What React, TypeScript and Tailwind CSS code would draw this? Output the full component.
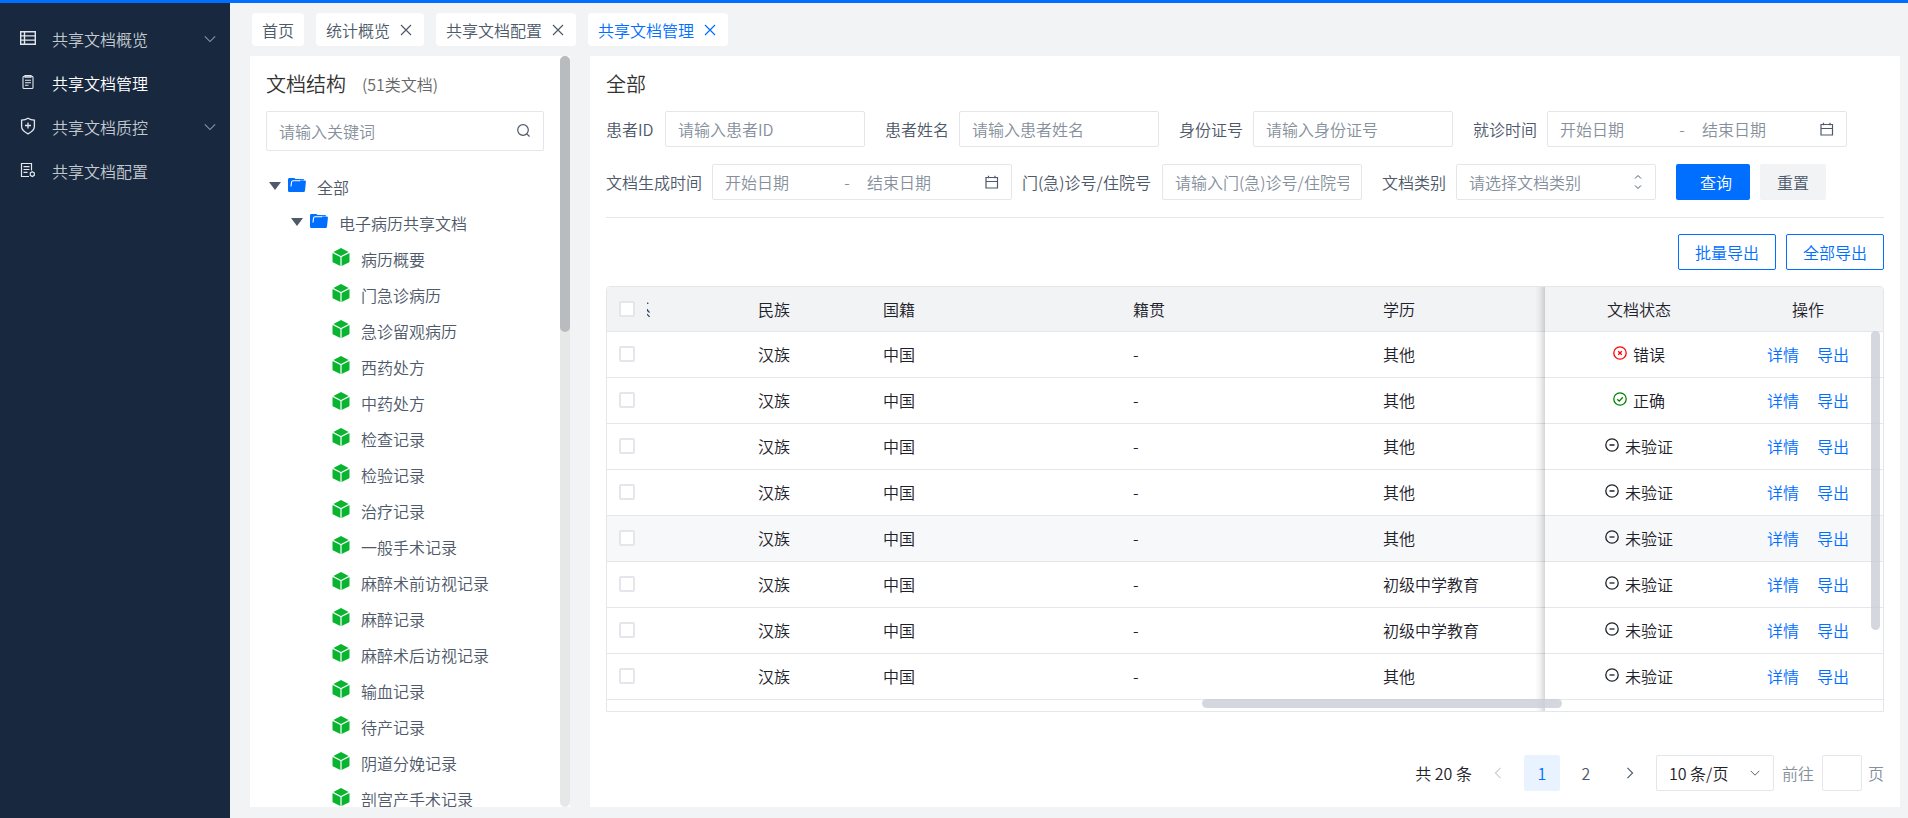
import type { ReactNode } from "react";

const FONT = "font-['Noto_Sans_CJK_SC',sans-serif]";

function Chevron({ className, d = "M1 1.5l6 6 6-6" }: { className: string; d?: string }) {
  return (
    <svg viewBox="0 0 14 9" className={className} fill="none" stroke="currentColor" strokeWidth="1.3" aria-hidden="true">
      <path d={d} />
    </svg>
  );
}

function CloseIcon() {
  return (
    <svg viewBox="0 0 14 14" className="size-3.5" fill="none" stroke="currentColor" strokeWidth="1.2" aria-hidden="true">
      <path d="M1 2l10 10M11 2L1 12" />
    </svg>
  );
}

function ListIcon() {
  return (
    <svg viewBox="0 0 16 16" className="size-4" fill="none" stroke="currentColor" strokeWidth="1.4" aria-hidden="true">
      <path d="M.7 1.700h14.600v12.600H.7zM4.500 1.700v12.600M.7 5.900h14.600M.7 10.100h14.600" />
    </svg>
  );
}

function ClipboardIcon() {
  return (
    <svg viewBox="0 0 16 16" className="size-4" fill="none" stroke="currentColor" strokeWidth="1.1" aria-hidden="true">
      <rect x="3" y="2.300" width="10" height="12.200" rx="1" />
      <path d="M5 1.500h6v1.800H5zM5 6.200h6M5 8.700h6M5 11.200h3.500" />
    </svg>
  );
}

function ShieldIcon() {
  return (
    <svg viewBox="0 0 16 18" className="h-[18px] w-4" fill="none" stroke="currentColor" strokeWidth="1.300" aria-hidden="true">
      <path d="M8 1.200c2 1.300 4 1.800 6.400 1.900v6.400c0 3-2.600 5.400-6.400 7.300-3.800-1.900-6.400-4.300-6.400-7.300V3.100C4 3 6 2.500 8 1.200zM8 5.500v6M5 8.500h6" />
    </svg>
  );
}

function DocConfigIcon() {
  return (
    <svg viewBox="0 0 16 16" className="size-4" fill="none" stroke="currentColor" strokeWidth="1.200" aria-hidden="true">
      <path d="M11.500 8.500V1.500h-10v13H9M3.500 4.700h6M3.500 7.500h6M3.500 10.300h4" />
      <path d="M12.300 9.700l2 1.200v2.400l-2 1.200-2-1.200v-2.400z" />
    </svg>
  );
}

function FolderIcon() {
  return (
    <svg viewBox="0 0 18 14" className="mb-1 h-3.5 w-[18px]" aria-hidden="true">
      <path d="M1.500 0h4.800l1.200 1h7.200c.9 0 1.400.5 1.400 1.400V4L14 13.500H1.600C.6 13.500 0 12.900 0 12V1.500C0 .6.600 0 1.500 0z" fill="#006eff" />
      <path d="M4.200 2.500h12.300c.9 0 1.600.6 1.400 1.600l-.9 8.300c-.1 1-.8 1.600-1.800 1.600H1.500C.6 14 0 13.400 0 12.500L3 8z" fill="#006eff" />
      <path d="M3 8.500l.5-4.200c.1-.9.700-1.500 1.600-1.500h7" fill="none" stroke="#fff" strokeWidth="1.100" />
      <path d="M11 2.300h5.500" fill="none" stroke="#fff" strokeOpacity=".6" strokeWidth=".8" />
    </svg>
  );
}

function CubeIcon() {
  return (
    <svg viewBox="0 0 18 18" className="mb-1 size-[18px]" fill="#09b530" aria-hidden="true">
      <path d="M9 0l7.600 3.900L9 7.900 1.400 3.900z" />
      <path d="M.5 5l7.900 4.100V18L1.200 14.600c-.5-.2-.7-.6-.7-1.100z" />
      <path d="M17.500 5L9.600 9.100V18l7.200-3.400c.5-.2.700-.6.700-1.100z" />
    </svg>
  );
}

function SearchIcon() {
  return (
    <svg viewBox="0 0 14 14" className="mb-0.5 size-3.5" fill="none" stroke="#4e5969" strokeWidth="1.200" aria-hidden="true">
      <circle cx="6" cy="7" r="5.300" />
      <path d="M9.800 10.800l2.700 2.700" />
    </svg>
  );
}

function CalendarIcon() {
  return (
    <svg viewBox="0 0 14 14" className="size-3.5 shrink-0" fill="none" stroke="#4e5969" strokeWidth="1.200" aria-hidden="true">
      <path d="M1 2.500h11.500v10.500H1zM1 6.500h11.500M3.500.8v2.400M10 .8v2.400" />
    </svg>
  );
}

type Status = "错误" | "正确" | "未验证";

function StatusIcon({ status }: { status: Status }) {
  const d = status === "错误" ? "M5.200 5.200l3.600 3.600M8.800 5.200L5.200 8.800" : status === "正确" ? "M4.200 7.200l2 1.900 3.600-3.900" : "M4.500 7h5";
  const color = status === "错误" ? "text-[#ff0000]" : status === "正确" ? "text-[#008000]" : "text-[#1d2129]";
  return (
    <svg viewBox="0 0 14 14" className={`mb-0.5 size-3.5 ${color}`} fill="none" stroke="currentColor" strokeWidth="1.300" aria-hidden="true">
      <circle cx="7" cy="7" r="6.200" />
      <path d={d} />
    </svg>
  );
}

const menu = [
  { label: "共享文档概览", icon: <ListIcon />, children: true, active: false },
  { label: "共享文档管理", icon: <ClipboardIcon />, children: false, active: true },
  { label: "共享文档质控", icon: <ShieldIcon />, children: true, active: false },
  { label: "共享文档配置", icon: <DocConfigIcon />, children: false, active: false },
];

const tabs = [
  { label: "首页", closable: false, active: false },
  { label: "统计概览", closable: true, active: false },
  { label: "共享文档配置", closable: true, active: false },
  { label: "共享文档管理", closable: true, active: true },
];

const docTypes = [
  "病历概要", "门急诊病历", "急诊留观病历", "西药处方", "中药处方", "检查记录", "检验记录", "治疗记录",
  "一般手术记录", "麻醉术前访视记录", "麻醉记录", "麻醉术后访视记录", "输血记录", "待产记录", "阴道分娩记录", "剖宫产手术记录",
];

const rows: { edu: string; status: Status; hover?: boolean }[] = [
  { edu: "其他", status: "错误" },
  { edu: "其他", status: "正确" },
  { edu: "其他", status: "未验证" },
  { edu: "其他", status: "未验证" },
  { edu: "其他", status: "未验证", hover: true },
  { edu: "初级中学教育", status: "未验证" },
  { edu: "初级中学教育", status: "未验证" },
  { edu: "其他", status: "未验证" },
];

function Sidebar() {
  return (
    <nav className="w-[230px] shrink-0 bg-[#18293f] pt-3.5">
      {menu.map((m) => (
        <a key={m.label} href="#" className={`flex h-11 items-center pl-5 pr-3.5 ${m.active ? "text-white" : "text-[#c3c8ce]"}`}>
          <span className="mb-0.5 text-[#e4e7eb]">{m.icon}</span>
          <span className="ml-4 flex-1">{m.label}</span>
          {m.children && <Chevron className="h-2 w-3 text-[#8a94a0]" />}
        </a>
      ))}
    </nav>
  );
}

function TabBar() {
  return (
    <div className="flex gap-3 px-0.5">
      {tabs.map((t) => (
        <div key={t.label} className={`flex h-[33px] items-center gap-2.5 rounded-sm bg-white px-2.5 ${t.active ? "text-[#006eff]" : "text-[#4e5969]"}`}>
          <a href="#">{t.label}</a>
          {t.closable && (
            <button type="button" aria-label={`关闭${t.label}`}>
              <CloseIcon />
            </button>
          )}
        </div>
      ))}
    </div>
  );
}

function Triangle() {
  return (
    <svg viewBox="0 0 12 8" className="mb-0.5 h-2 w-3" fill="#4e5969" aria-hidden="true">
      <path d="M0 0h12L6 8z" />
    </svg>
  );
}

function TreePanel() {
  return (
    <aside className="flex w-80 shrink-0 bg-white">
      <div className="flex min-w-0 flex-1 flex-col overflow-hidden px-4">
        <div className="flex h-[55px] shrink-0 items-center gap-4">
          <h2 className="text-xl font-[350] text-[#333333]">文档结构</h2>
          <span className="text-[#666666]">(51类文档)</span>
        </div>
        <label className="flex h-10 shrink-0 items-center rounded-xs border border-[#e5e6eb] px-3">
          <input aria-label="关键词" placeholder="请输入关键词" className="min-w-0 flex-1 outline-none placeholder:text-[#86909c]" />
          <SearchIcon />
        </label>
        <ul className="mt-[18px] min-h-0 flex-1 overflow-hidden text-[#4e5969]">
          <li className="flex h-9 items-center pl-[3px]">
            <Triangle />
            <span className="ml-[7px] mr-[11px]"><FolderIcon /></span>
            全部
          </li>
          <li className="flex h-9 items-center pl-[25px]">
            <Triangle />
            <span className="ml-[7px] mr-[11px]"><FolderIcon /></span>
            电子病历共享文档
          </li>
          {docTypes.map((d) => (
            <li key={d} className="flex h-9 items-center gap-[11px] pl-[66px]">
              <CubeIcon />
              {d}
            </li>
          ))}
        </ul>
      </div>
      <div className="w-2.5 rounded-full bg-[#e6e8e8]">
        <div className="h-[276px] rounded-full bg-[#b9bcbe]" />
      </div>
    </aside>
  );
}

function Field({ id, label, children, tight }: { id: string; label: string; children: ReactNode; tight?: boolean }) {
  return (
    <div className={`flex items-center ${tight ? "mr-2.5" : "mr-5"}`}>
      <label htmlFor={id} className={`mr-2.5 ${label.includes("/") ? "min-w-[130px]" : "min-w-[49px]"}`}>{label}</label>
      {children}
    </div>
  );
}

function TextField({ id, label }: { id: string; label: string }) {
  return (
    <Field id={id} label={label}>
      <input id={id} placeholder={`请输入${label}`} className="h-9 w-50 rounded-xs border border-[#e5e6eb] px-3 outline-none placeholder:text-[#86909c]" />
    </Field>
  );
}

function DateRange({ id, label }: { id: string; label: string }) {
  return (
    <Field id={id} label={label} tight>
      <div className="flex h-9 w-75 items-center rounded-xs border border-[#e5e6eb] px-3 text-[#86909c]">
        <input id={id} placeholder="开始日期" className="w-28 outline-none placeholder:text-[#86909c]" />
        <span className="w-5 text-center">-</span>
        <input aria-label={`${label}结束日期`} placeholder="结束日期" className="ml-2.5 min-w-0 flex-1 outline-none placeholder:text-[#86909c]" />
        <CalendarIcon />
      </div>
    </Field>
  );
}

function Filters() {
  return (
    <form className="flex flex-wrap items-center gap-y-[17px] border-b border-[#e5e6eb] pb-[17px] text-[#4e5969]">
      <TextField id="pid" label="患者ID" />
      <TextField id="pname" label="患者姓名" />
      <TextField id="idcard" label="身份证号" />
      <DateRange id="visit" label="就诊时间" />
      <DateRange id="created" label="文档生成时间" />
      <TextField id="visitno" label="门(急)诊号/住院号" />
      <Field id="category" label="文档类别">
        <div className="relative">
          <select id="category" className="h-9 w-50 appearance-none rounded-xs border border-[#e5e6eb] px-3 text-[#86909c] outline-none">
            <option>请选择文档类别</option>
          </select>
          <svg viewBox="0 0 8 16" className="pointer-events-none absolute right-3.5 top-2.5 h-4 w-2" fill="none" stroke="#4e5969" aria-hidden="true">
            <path d="M1 4.500l3-3 3 3M1 11.500l3 3 3-3" />
          </svg>
        </div>
      </Field>
      <button type="button" className="h-9 rounded-xs bg-[#006eff] pl-6 pr-[18px] text-white">查询</button>
      <button type="button" className="ml-2.5 h-9 rounded-xs bg-[#f2f3f5] px-[17px]">重置</button>
    </form>
  );
}

const boxClass = "block size-4 appearance-none rounded-xs border-2 border-[#e5e6eb] bg-white";

function RecordTable() {
  return (
    <div className="relative overflow-hidden rounded-t-sm border border-[#e5e6eb] pb-[11px] text-[#1d2129]">
      <table className="w-full table-fixed border-collapse text-left">
        <colgroup>
          <col className="w-10" />
          <col className="w-[100px]" />
          <col className="w-[125px]" />
          <col className="w-[250px]" />
          <col className="w-[250px]" />
          <col />
          <col className="w-[188px]" />
          <col className="w-[150px]" />
        </colgroup>
        <thead>
          <tr className="h-11 border-b border-[#e5e6eb] bg-[#f2f3f5] [&>th]:font-[350]">
            <th className="pl-3"><input type="checkbox" aria-label="全选" className={boxClass} /></th>
            <th><span className="flex w-1 justify-end overflow-hidden">系</span></th>
            <th className="pl-[11px]">民族</th>
            <th className="pl-[11px]">国籍</th>
            <th className="pl-[11px]">籍贯</th>
            <th className="pl-[11px]">学历</th>
            <th className="text-center">文档状态</th>
            <th className="text-center">操作</th>
          </tr>
        </thead>
        <tbody>
          {rows.map((r, i) => (
            <tr key={i} className={`h-[46px] border-b border-[#e5e6eb] ${r.hover ? "bg-[#f7f8fa]" : ""}`}>
              <td className="pl-3"><input type="checkbox" aria-label={`选择第${i + 1}行`} className={boxClass} /></td>
              <td />
              <td className="pl-[11px]">汉族</td>
              <td className="pl-[11px]">中国</td>
              <td className="pl-[11px]">-</td>
              <td className="pl-[11px]">{r.edu}</td>
              <td>
                <span className="flex items-center justify-center gap-1.5">
                  <StatusIcon status={r.status} />
                  {r.status}
                </span>
              </td>
              <td>
                <span className="flex justify-center gap-[18px] text-[#006eff]">
                  <a href="#">详情</a>
                  <a href="#">导出</a>
                </span>
              </td>
            </tr>
          ))}
        </tbody>
      </table>
      <div className="pointer-events-none absolute bottom-0 right-[338px] top-0 w-2.5 bg-linear-to-l from-black/16 via-black/5 to-transparent" />
      <div className="absolute right-[3px] top-11 h-[299px] w-[9px] rounded-full bg-[#c9cdd4]/80" />
      <div className="absolute bottom-[3px] right-[321px] h-[9px] w-[360px] rounded-full bg-[#c9cdd4]/80" />
    </div>
  );
}

function Pagination() {
  return (
    <div className="mt-auto flex items-center justify-end gap-2 text-[#1d2129]">
      <span>共 20 条</span>
      <button type="button" aria-label="上一页" className="flex size-9 items-center justify-center text-[#c9cdd4]">
        <Chevron className="h-2 w-3 rotate-90" />
      </button>
      <button type="button" className="size-9 rounded-xs bg-[#e8f3ff] text-[#006eff]">1</button>
      <button type="button" className="size-9 text-[#4e5969]">2</button>
      <button type="button" aria-label="下一页" className="flex size-9 items-center justify-center text-[#4e5969]">
        <Chevron className="h-2 w-3 -rotate-90" />
      </button>
      <div className="relative">
        <select aria-label="每页条数" className="h-9 w-[118px] appearance-none rounded-xs border border-[#e5e6eb] px-3 outline-none">
          <option>10 条/页</option>
        </select>
        <Chevron className="pointer-events-none absolute right-3.5 top-3.5 h-2 w-2.5 text-[#4e5969]" />
      </div>
      <label htmlFor="goto" className="text-[#86909c]">前往</label>
      <input id="goto" className="h-9 w-10 rounded-xs border border-[#e5e6eb] text-center outline-none" />
      <span className="-ml-0.5 text-[#86909c]">页</span>
    </div>
  );
}

export default function App() {
  return (
    <div className={`flex h-screen min-h-[680px] flex-col overflow-hidden border-t-3 border-[#006eff] bg-[#f2f3f5] text-base font-[350] ${FONT}`}>
      <div className="flex min-h-0 flex-1">
        <Sidebar />
        <main className="flex min-w-0 flex-1 flex-col gap-2.5 pb-[11px] pl-5 pr-2 pt-2.5">
          <TabBar />
          <div className="flex min-h-0 flex-1 gap-5">
            <TreePanel />
            <section className="flex min-w-0 flex-1 flex-col bg-white px-4 pb-4">
              <h1 className="flex h-[55px] shrink-0 items-center text-xl font-[350] text-[#333333]">全部</h1>
              <Filters />
              <div className="flex justify-end gap-2.5 py-4 text-[#006eff]">
                <button type="button" className="h-9 rounded-xs border border-[#006eff] px-4">批量导出</button>
                <button type="button" className="h-9 rounded-xs border border-[#006eff] px-4">全部导出</button>
              </div>
              <RecordTable />
              <Pagination />
            </section>
          </div>
        </main>
      </div>
    </div>
  );
}
